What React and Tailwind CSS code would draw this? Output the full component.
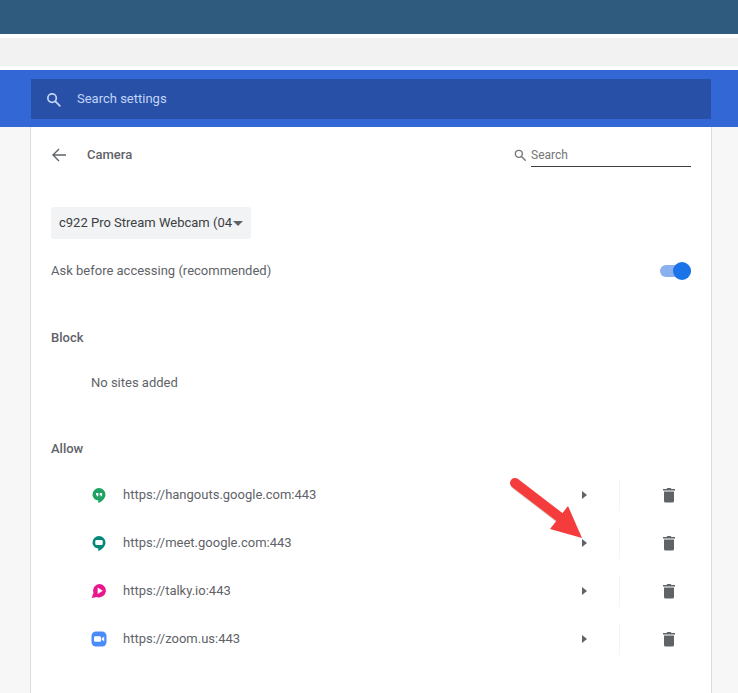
const SITES = [
  { url: "https://hangouts.google.com:443", icon: "hangouts" },
  { url: "https://meet.google.com:443", icon: "meet" },
  { url: "https://talky.io:443", icon: "talky" },
  { url: "https://zoom.us:443", icon: "zoom" },
];

function SearchIcon({ className }) {
  return (
    <svg viewBox="0 0 24 24" className={className} fill="none" stroke="currentColor" strokeWidth="2.4" strokeLinecap="round">
      <circle cx="10" cy="10" r="6" />
      <path d="M15 15l6 6" />
    </svg>
  );
}

function SiteIcon({ type }) {
  if (type === "hangouts") {
    return (
      <svg viewBox="0 0 16 16" className="w-4 h-4">
        <path d="M8 1a6.500 6.500 0 0 0-6.500 6.500c0 3.400 2.900 5.800 5.800 6V16c3.600-1.300 7.200-4.500 7.200-8.500A6.500 6.500 0 0 0 8 1z" fill="#1da462" />
        <path d="M5 6h2.400v2c0 .9-.6 1.500-1.400 1.600V8.200H5zM8.700 6h2.400v2c0 .9-.6 1.500-1.400 1.600V8.200H8.700z" fill="#fff" />
      </svg>
    );
  }
  if (type === "meet") {
    return (
      <svg viewBox="0 0 16 16" className="w-4 h-4">
        <path d="M8 1a6.500 6.500 0 0 0-6.500 6.500c0 3.400 2.900 5.800 5.800 6V16c3.600-1.300 7.200-4.500 7.200-8.500A6.500 6.500 0 0 0 8 1z" fill="#00897b" />
        <rect x="4.300" y="5" width="7.400" height="5" rx="1.200" fill="#fff" />
      </svg>
    );
  }
  if (type === "talky") {
    return (
      <svg viewBox="0 0 16 16" className="w-4 h-4">
        <path d="M8.800 1a6.700 6.700 0 0 0-6.300 8.900L.600 15l5.100-1.100A6.700 6.700 0 1 0 8.800 1z" fill="#e9168c" />
        <path d="M6.600 4.600l5.300 3.200-5.300 3.200z" fill="#fff" />
      </svg>
    );
  }
  return (
    <svg viewBox="0 0 16 16" className="w-4 h-4">
      <rect x="0.500" y="0.500" width="15" height="15" rx="4.500" fill="#4a8cf7" />
      <rect x="3" y="5.300" width="7" height="5.400" rx="1.200" fill="#fff" />
      <path d="M10.600 7.400l2.600-1.800v4.800l-2.600-1.800z" fill="#fff" />
    </svg>
  );
}

function TrashIcon() {
  return (
    <svg viewBox="0 0 14 16" className="w-3.5 h-4" fill="#5f6368">
      <path d="M1 2h3.500l1-1h3l1 1H13v1.500H1z" />
      <path d="M2 4.500h10V14a1.500 1.500 0 0 1-1.500 1.500h-7A1.500 1.500 0 0 1 2 14z" />
    </svg>
  );
}

function SiteRow({ site }) {
  return (
    <div className="h-12 flex items-center pl-[60px] pr-[20px]">
      <div className="w-[32px] flex-none">
        <SiteIcon type={site.icon} />
      </div>
      <span className="flex-1 text-[13px] text-[#5f6368]">{site.url}</span>
      <span className="w-0 h-0 border-y-[4px] border-y-transparent border-l-[5px] border-l-[#5f6368] mr-[32px]" />
      <div className="w-px h-8 bg-[#f4f4f4]" />
      <div className="w-[71px] flex-none flex justify-end pr-[15px]">
        <TrashIcon />
      </div>
    </div>
  );
}

export default function App() {
  return (
    <div className="relative h-[693px] overflow-hidden bg-[#f7f7f7] font-['Roboto',sans-serif]">
      <div className="h-[34px] bg-[#2e5b7e]" />
      <div className="h-[4px] bg-white" />
      <div className="h-[28px] bg-[#f2f2f2]" />
      <div className="h-[4px] bg-white" />

      <header className="h-[57px] bg-[#3367d6] pt-[9px] pl-[31px] pr-[27px]">
        <div className="h-[40px] bg-[#2850a7] flex items-center pl-[14px]">
          <SearchIcon className="w-[17px] h-[17px] text-[#c3d5f7]" />
          <span className="ml-[15px] text-[13px] text-[#c3d5f7]">Search settings</span>
        </div>
      </header>

      <main className="ml-[30px] mr-[26px] h-[566px] bg-white border-x border-[#dcdcdc]">
        <div className="h-[56px] flex items-center px-[20px]">
          <svg viewBox="0 0 16 16" className="w-4 h-4 text-[#5f6368]" fill="none" stroke="currentColor" strokeWidth="1.400">
            <path d="M15 8H2M8 2L2 8l6 6" />
          </svg>
          <h1 className="ml-[20px] flex-1 text-[13px] font-medium text-[#5f6368]">Camera</h1>
          <SearchIcon className="w-[14px] h-[14px] text-[#757575]" />
          <div className="ml-[4px] w-[160px] h-[24px] border-b border-[#3c4043] text-[12px] leading-[25px] text-[#757575]">
            Search
          </div>
        </div>

        <div className="mt-[24px] ml-[20px] w-[200px] h-[32px] rounded-[3px] bg-[#f1f3f4] flex items-center pl-[8px]">
          <span className="text-[13px] text-[#3c4043] whitespace-nowrap">c922 Pro Stream Webcam (04</span>
          <span className="ml-[1px] w-0 h-0 border-x-[5px] border-x-transparent border-t-[5px] border-t-[#5f6368]" />
        </div>

        <div className="mt-[16px] h-[32px] flex items-center justify-between px-[20px]">
          <span className="text-[13px] text-[#5f6368]">Ask before accessing (recommended)</span>
          <div className="relative w-[31px] h-[12px] rounded-full bg-[#8ab0f0]">
            <div className="absolute right-0 top-[-3px] w-[18px] h-[18px] rounded-full bg-[#1a73e8]" />
          </div>
        </div>

        <h2 className="mt-[41px] pl-[20px] text-[13px] leading-[20px] font-medium text-[#5f6368]">Block</h2>
        <p className="mt-[25px] pl-[60px] text-[13px] leading-[20px] text-[#5f6368]">No sites added</p>

        <h2 className="mt-[46px] mb-[12px] pl-[20px] text-[13px] leading-[20px] font-medium text-[#5f6368]">Allow</h2>
        <div>
          {SITES.map((site) => (
            <SiteRow key={site.url} site={site} />
          ))}
        </div>
      </main>

      {/* annotation arrow */}
      <svg className="absolute left-0 top-0 pointer-events-none" width="738" height="693" viewBox="0 0 738 693">
        <path d="M515 483L562 519" stroke="#b9b2a8" strokeWidth="10" strokeLinecap="round" opacity="0.5" transform="translate(1 2)" />
        <path d="M515 483L562 519" stroke="#f43c3c" strokeWidth="10" strokeLinecap="round" />
        <path d="M568 506L582 538 550 529z" fill="#f43c3c" />
      </svg>
    </div>
  );
}
